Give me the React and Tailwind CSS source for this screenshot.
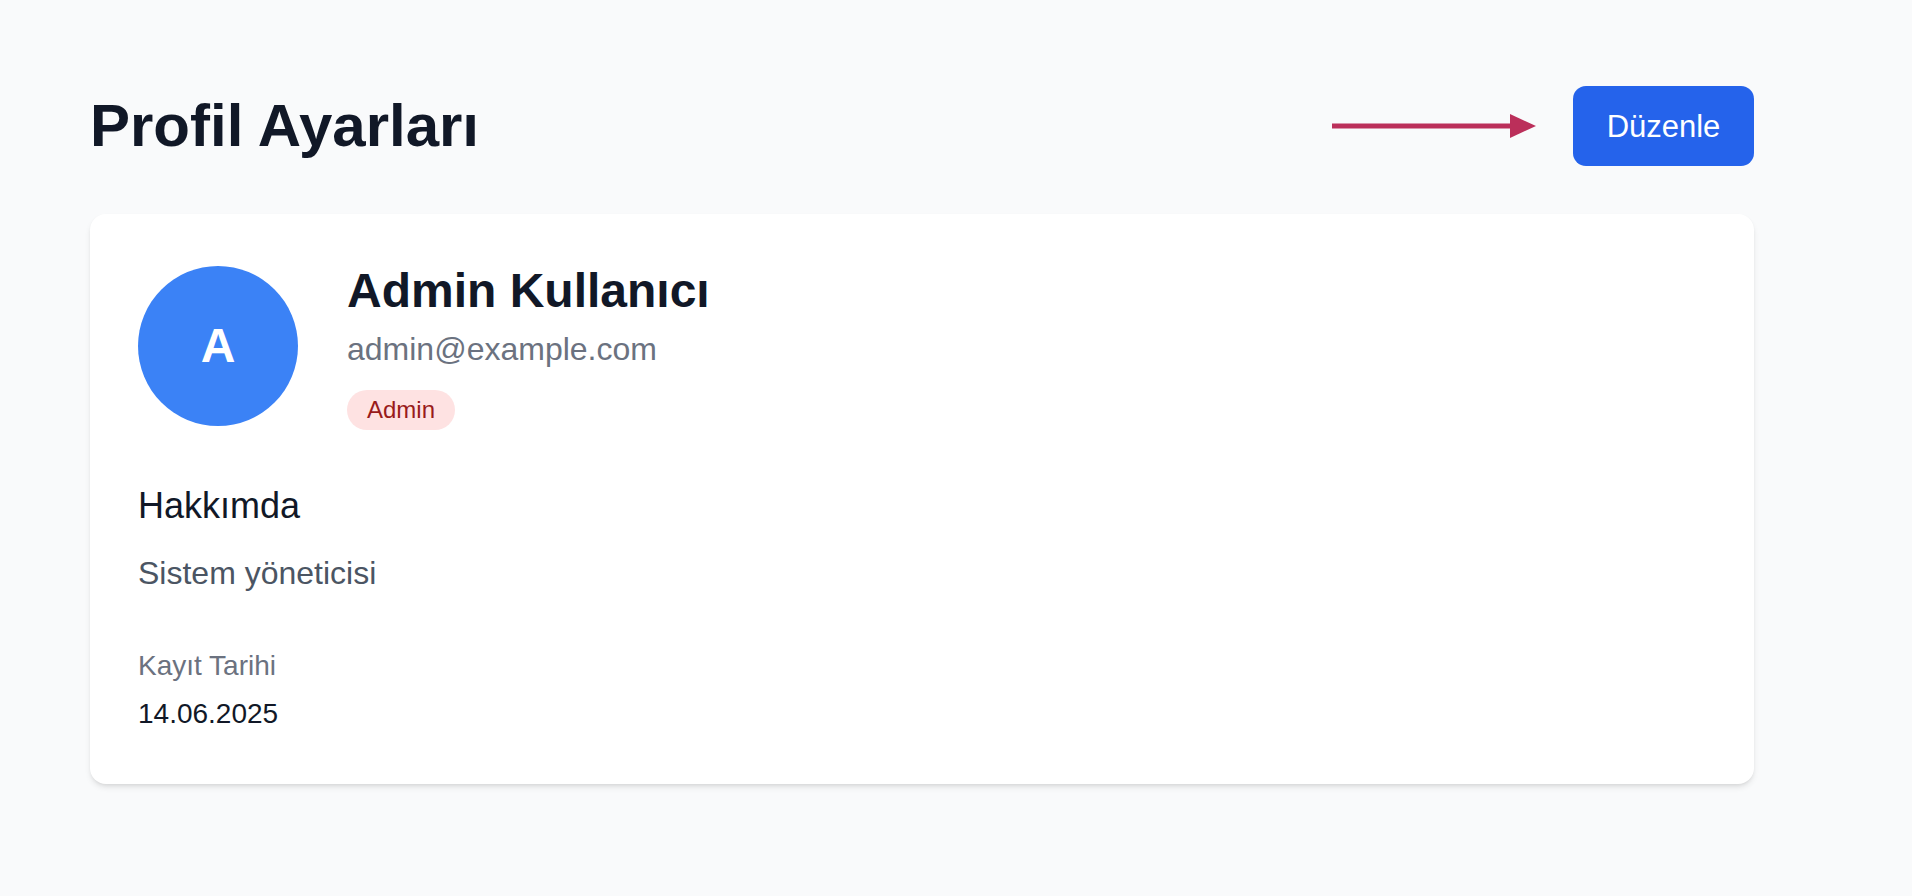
import React from 'react'

function Arrow() {
  return (
    <svg width="206" height="28" viewBox="0 0 206 28" className="shrink-0">
      <line x1="2" y1="14" x2="182" y2="14" stroke="#bb2f5a" strokeWidth="5" />
      <polygon points="180,2 206,14 180,26" fill="#bb2f5a" />
    </svg>
  )
}

function App() {
  return (
    <div className="min-h-screen bg-[#f9fafb] font-['Liberation_Sans',Arial,sans-serif]">
      <div className="w-[1664px] ml-[90px] pt-[86px]">
        <div className="flex items-center justify-between">
          <h1 className="text-[60px] leading-none font-bold text-[#111827]">Profil Ayarları</h1>
          <div className="flex items-center gap-[37px]">
            <Arrow />
            <button className="w-[181px] h-[80px] rounded-[13px] bg-[#2563eb] text-white text-[31px] leading-none">
              Düzenle
            </button>
          </div>
        </div>

        <div className="mt-[48px] bg-white rounded-2xl shadow-md px-[48px] pt-[48px] pb-[50px]">
          <div className="flex items-center gap-[49px]">
            <div className="w-[160px] h-[160px] rounded-full bg-[#3b82f6] flex items-center justify-center">
              <span className="text-white text-[48px] font-bold leading-none">A</span>
            </div>
            <div className="flex flex-col items-start">
              <h2 className="text-[48px] leading-[58px] font-bold text-[#111827]">Admin Kullanıcı</h2>
              <p className="mt-[9px] text-[32px] leading-[40px] text-[#6b7280]">admin@example.com</p>
              <span className="mt-[21px] h-[40px] px-[20px] rounded-full bg-[#fee2e2] text-[#991b1b] text-[24px] leading-[40px]">
                Admin
              </span>
            </div>
          </div>

          <div className="mt-[54px]">
            <h3 className="text-[36px] leading-[43px] text-[#111827]">Hakkımda</h3>
            <p className="mt-[22px] text-[32px] leading-[48px] text-[#4b5563]">Sistem yöneticisi</p>
          </div>

          <div className="mt-[49px]">
            <p className="text-[28px] leading-[40px] text-[#6b7280]">Kayıt Tarihi</p>
            <p className="mt-[8px] text-[28px] leading-[40px] text-[#111827]">14.06.2025</p>
          </div>
        </div>
      </div>
    </div>
  )
}

export default App
